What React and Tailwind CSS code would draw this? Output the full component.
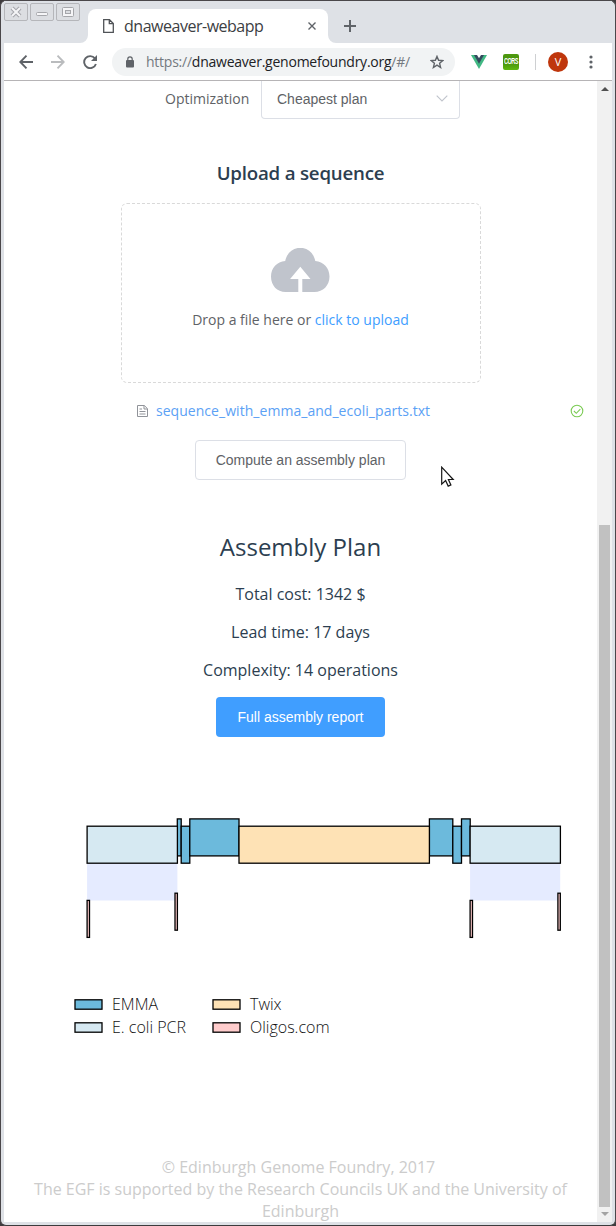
const INK = "#5f6368";

const blocks = [
  { x: 177.3, y: 818.9, w: 3.9, fill: "#6cbadc" },
  { x: 181.2, y: 826.2, w: 8.6, fill: "#6cbadc" },
  { x: 189.8, y: 818.9, w: 49.2, fill: "#6cbadc" },
  { x: 429.4, y: 818.9, w: 23.4, fill: "#6cbadc" },
  { x: 452.8, y: 826.2, w: 8.7, fill: "#6cbadc" },
  { x: 461.5, y: 818.9, w: 8.7, fill: "#6cbadc" },
  { x: 239, y: 826.2, w: 190.4, fill: "#fee2b5" },
  { x: 87.1, y: 826.2, w: 90.3, fill: "#d6e9f2" },
  { x: 470.1, y: 826.2, w: 90.3, fill: "#d6e9f2" },
  { x: 87.1, y: 900.4, w: 2.4, fill: "#ffcccc" },
  { x: 175, y: 893.2, w: 2.4, fill: "#ffcccc" },
  { x: 470.1, y: 900.4, w: 2.4, fill: "#ffcccc" },
  { x: 557.9, y: 893.2, w: 2.4, fill: "#ffcccc" },
];

function WindowButton({ children }) {
  return (
    <div className="flex h-[18px] w-6 items-center justify-center rounded-[2px] border border-[#b5b6ba] bg-[#dcdee2]">
      <svg width="18" height="14" viewBox="0 0 18 14" fill="none">{children}</svg>
    </div>
  );
}

function TitleBar() {
  return (
    <div className="flex h-[42px] shrink-0 bg-[#dee1e6]">
      <div className="flex w-[76px] gap-[2px] pt-[2px]">
        <WindowButton>
          <path d="M5 3l8 8M13 3l-8 8" stroke="#a5a6aa" strokeWidth="4" />
          <path d="M5 3l8 8M13 3l-8 8" stroke="#f5f5f7" strokeWidth="2" />
        </WindowButton>
        <WindowButton>
          <rect x="3.5" y="7.5" width="11" height="3" rx="1" fill="#f5f5f7" stroke="#a5a6aa" />
        </WindowButton>
        <WindowButton>
          <rect x="3.5" y="2.5" width="11" height="9" rx="1" fill="#f5f5f7" stroke="#a5a6aa" />
          <rect x="6.5" y="5.5" width="5" height="3" fill="#dcdee2" stroke="#a5a6aa" />
        </WindowButton>
      </div>
      <svg className="mt-[34px]" width="8" height="8" viewBox="0 0 8 8"><path d="M8 0v8H0A8 8 0 0 0 8 0" fill="#fff" /></svg>
      <div className="mt-[8px] flex w-[240px] items-center rounded-t-lg bg-white pl-[15px] pr-[12px]">
        <svg width="11" height="14" viewBox="0 0 11 14" fill="none" stroke="#505357" strokeWidth="1.3"><path d="M.7.7H6.5L10.3 4.5V13.3H.7zM6.3.7V4.7H10.3" /></svg>
        <span className="ml-[10px] w-[150px] whitespace-nowrap font-['Open_Sans',sans-serif] text-[16px] leading-5 tracking-[-0.48px] text-[#3c4043]">dnaweaver-webapp</span>
        <svg className="ml-auto" width="8" height="8" viewBox="0 0 8 8" stroke={INK} strokeWidth="1.4"><path d="M.5.5l7 7M7.5.5l-7 7" /></svg>
      </div>
      <svg className="mt-[34px]" width="8" height="8" viewBox="0 0 8 8"><path d="M0 0v8H8A8 8 0 0 1 0 0" fill="#fff" /></svg>
      <svg className="ml-2 mt-[19px]" width="12" height="12" viewBox="0 0 12 12" stroke={INK} strokeWidth="2"><path d="M6 0v12M0 6h12" /></svg>
    </div>
  );
}

function Toolbar() {
  return (
    <div className="flex h-[38px] shrink-0 items-center border-b border-[#b6b4b6] bg-white pl-[15px]">
      <svg width="14" height="14" viewBox="0 0 14 14" fill="none" stroke={INK} strokeWidth="1.9"><path d="M14 7H1.4M7.5.7L1.3 7l6.2 6.3" /></svg>
      <svg className="ml-[18px]" width="14" height="14" viewBox="0 0 14 14" fill="none" stroke="#babcbe" strokeWidth="1.9"><path d="M0 7h12.6M6.5.7L12.7 7l-6.2 6.3" /></svg>
      <svg className="ml-[18px]" width="14" height="14" viewBox="0 0 14 14"><path d="M11.9 3.4A6 6 0 1 0 12.9 9" fill="none" stroke={INK} strokeWidth="1.9" /><path d="M14 0v6H8z" fill={INK} /></svg>
      <div className="ml-[15px] flex h-7 w-[343px] items-center rounded-full bg-[#f1f3f4] pl-[14px] pr-[11px]">
        <svg width="8" height="12" viewBox="0 0 8 12"><rect y="4" width="8" height="7.5" rx="1" fill={INK} /><path d="M1.800 5V3a2.200 2.200 0 0 1 4.400 0v2" fill="none" stroke={INK} strokeWidth="1.2" /></svg>
        <span className="ml-3 w-[266px] whitespace-nowrap font-['Open_Sans',sans-serif] text-[14px] leading-5 tracking-[-0.24px] text-[#747980]">https://<span className="text-[#202124]">dnaweaver.genomefoundry.org</span>/#/</span>
        <svg className="ml-auto" width="14" height="14" viewBox="0 0 14 14" fill="none" stroke={INK} strokeWidth="1.4"><path d="M7 1.4l1.6 3.9 4.3.3-3.3 2.7 1 4.2L7 10.2l-3.6 2.3 1-4.2-3.3-2.7 4.3-.3z" /></svg>
      </div>
      <svg className="ml-[16px]" width="16" height="14" viewBox="0 0 16 14"><path d="M0 0h16L8 14z" fill="#41b883" /><path d="M3 0h10L8 8.7z" fill="#34495e" /><path d="M6 0h4L8 3.2z" fill="#fff" /></svg>
      <div className="ml-[16px] flex h-4 w-4 items-center justify-center rounded-[2px] bg-linear-to-b from-[#4f9a10] via-[#468f0c] to-[#5fb80f] font-['Liberation_Sans',sans-serif] text-[5.5px] font-bold leading-none tracking-[-0.5px] text-white"><span className="scale-y-150">CORS</span></div>
      <div className="ml-4 h-4 w-px bg-[#ced0d2]" />
      <div className="ml-3 flex h-5 w-5 items-center justify-center rounded-full bg-[#bf360c] font-['Open_Sans',sans-serif] text-[11px] leading-none text-white">V</div>
      <svg className="ml-[21px]" width="4" height="14" viewBox="0 0 4 14" fill={INK}><circle cx="2" cy="2" r="1.6" /><circle cx="2" cy="7" r="1.6" /><circle cx="2" cy="12" r="1.6" /></svg>
    </div>
  );
}

function Legend({ fill, label }) {
  return (
    <div className="flex h-[23px] items-center">
      <svg width="29" height="11" viewBox="0 0 29 11"><rect x="1" y=".8" width="27" height="9.4" fill={fill} stroke="#000" strokeWidth="1.3" /></svg>
      <span className="mb-[2px] ml-[9px] whitespace-nowrap">{label}</span>
    </div>
  );
}

function Page() {
  return (
    <main className="flex min-w-0 flex-1 flex-col items-center overflow-hidden bg-white text-[#2c3e50]">
      <div className="flex w-full items-start pl-[161px]">
        <span className="mt-[7px] w-[84px] whitespace-nowrap text-[14px] leading-[22px] text-[#606266]">Optimization</span>
        <div className="ml-3 flex h-[38px] w-[199px] items-center justify-between rounded-b border border-t-0 border-[#dcdfe6] pl-[15px] pr-[11px] font-['Liberation_Sans',sans-serif] text-[14px] text-[#606266]">
          <span>Cheapest plan</span>
          <svg className="mb-[2px]" width="12" height="7" viewBox="0 0 12 7" fill="none" stroke="#c0c4cc" strokeWidth="1.1"><path d="M.7.6L6 6 11.3.6" /></svg>
        </div>
      </div>
      <h3 className="mt-[40px] whitespace-nowrap text-[18.7px] font-semibold leading-7 tracking-[-0.21px]">Upload a sequence</h3>
      <div className="mt-[16px] flex h-[180px] w-[360px] flex-col items-center rounded-md border border-dashed border-[#d9d9d9]">
        <svg className="mr-[2px] mt-[44px]" width="60" height="45" viewBox="0 0.5 60 45"><path d="M15.6 44.5C7 44.5 1 38 1 29c0-8.700 6-15 14.200-15.600C17 5.500 22.500.3 30.300.3S43.500 5.500 45.300 13.400C53.500 14 59.500 20.300 59.500 29c0 9-6.500 15.500-15 15.500H32.300V31.500H40.500L30.300 19.300 20.100 31.500H28.300v13z" fill="#c0c4cc" /></svg>
        <p className="mt-[16px] whitespace-nowrap text-[14px] leading-[22px] text-[#606266]">Drop a file here or <span className="text-[#409eff]">click to upload</span></p>
      </div>
      <div className="mt-[17px] flex h-[22px] w-full items-center pl-[133px] pr-[13px]">
        <svg width="11" height="12" viewBox="0 0 11 12" fill="none" stroke="#909399"><path d="M.5.5H7.300L10.500 3.700V11.500H.5zM7 .5V4H10.500M2.500 4H5M2.500 6.500H8.500M2.500 9H8.500" /></svg>
        <span className="ml-[8px] whitespace-nowrap text-[14px] leading-[22px] tracking-[0.04px] text-[#5ba1f5]">sequence_with_emma_and_ecoli_parts.txt</span>
        <svg className="ml-auto" width="14" height="14" viewBox="0 0 14 14" fill="none" stroke="#7bcb54" strokeWidth="1.1"><circle cx="7" cy="7" r="5.8" /><path d="M3.900 7L6.300 9.300 10.300 5.100" /></svg>
      </div>
      <div className="relative mt-[18px]">
        <button className="h-10 w-[211px] rounded border border-[#dcdfe6] font-['Liberation_Sans',sans-serif] text-[14px] text-[#606266]">Compute an assembly plan</button>
        <svg className="absolute left-[246px] top-[26px]" width="14" height="22" viewBox="0 0 14 22"><path d="M.7 1.200V18.200L4.600 14.500 7.200 20.100 9.900 18.900 7.400 13.500H12.200z" fill="#fff" stroke="#161616" strokeWidth="1.2" /></svg>
      </div>
      <h2 className="mt-[50px] whitespace-nowrap text-[24px] leading-[34px]">Assembly Plan</h2>
      <p className="mt-[19px] whitespace-nowrap leading-[22px]">Total cost: 1342 $</p>
      <p className="mt-4 whitespace-nowrap leading-[22px]">Lead time: 17 days</p>
      <p className="mt-4 whitespace-nowrap leading-[22px]">Complexity: 14 operations</p>
      <button className="mt-[16px] h-10 w-[169px] shrink-0 rounded bg-[#409eff] font-['Liberation_Sans',sans-serif] text-[14px] text-white">Full assembly report</button>
      <svg className="mt-[63px] shrink-0" width="593" height="160" viewBox="4 800 593 160">
        <path d="M87.100 863H177.400V900.400H87.100zM470.100 863H560.200V900.400H470.100z" fill="#e5ebff" />
        {blocks.map((b) => (
          <rect key={b.x + "-" + b.y} x={b.x} y={b.y} width={b.w} height="37" fill={b.fill} stroke="#000" strokeWidth="1.3" />
        ))}
      </svg>
      <div className="mt-[33px] grid w-full grid-cols-[138px_1fr] pl-[70px] text-[16px] font-light text-[#111]">
        <Legend fill="#6cbadc" label="EMMA" />
        <Legend fill="#fee2b5" label="Twix" />
        <Legend fill="#d6e9f2" label="E. coli PCR" />
        <Legend fill="#ffcccc" label="Oligos.com" />
      </div>
      <footer className="mt-[117px] w-full text-center leading-[22px] text-[#cccccc]">
        <p className="pr-[4px]">© Edinburgh Genome Foundry, 2017</p>
        <p>The EGF is supported by the Research Councils UK and the University of<br />Edinburgh</p>
      </footer>
    </main>
  );
}

export default function App() {
  return (
    <div className="h-[1226px] w-[616px] bg-[#3f3c3e]">
      <div className="flex h-full flex-col rounded-md border border-[#4a474a] border-b-[#3c3b3d] bg-[#dee1e6] px-[3px] pb-[3px] font-['Open_Sans',sans-serif] text-[16px]">
        <TitleBar />
        <Toolbar />
        <div className="flex min-h-0 flex-1">
          <Page />
          <div className="flex w-[15px] shrink-0 flex-col items-center bg-[#f1f1f1]">
            <svg className="mt-[6px]" width="8" height="4" viewBox="0 0 8 4"><path d="M4 0l4 4H0z" fill="#505050" /></svg>
            <div className="mt-[434px] h-[682px] w-[11px] bg-[#c1c1c1]" />
            <svg className="mt-[5px]" width="8" height="4" viewBox="0 0 8 4"><path d="M0 0h8L4 4z" fill="#a3a3a3" /></svg>
          </div>
        </div>
      </div>
    </div>
  );
}
